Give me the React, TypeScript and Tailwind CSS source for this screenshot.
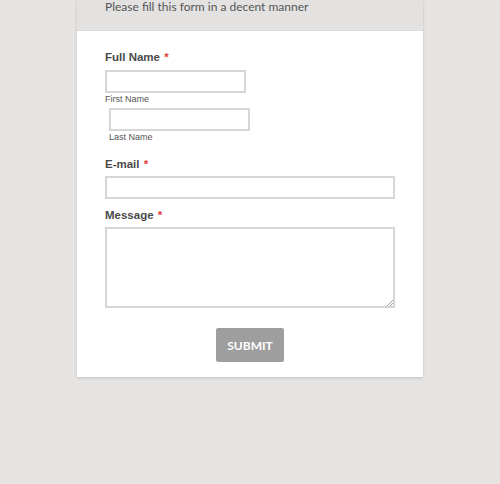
import React from "react";

export default function App() {
  const label = "text-[11.5px] font-bold text-[#4a4a4a] leading-[14px]";
  const sans = { fontFamily: '"Liberation Sans", Arial, sans-serif' } as React.CSSProperties;
  return (
    <div className="w-[500px] h-[484px] bg-[#e5e4e2] overflow-hidden" style={sans}>
      <div className="ml-[77px] w-[346px] h-[377px] bg-white shadow-[0_1px_3px_rgba(0,0,0,0.15)] flex flex-col">
        <div className="h-[31px] bg-[#e3e2e1] pl-[28px] pt-[1px] border-b border-dotted border-[#d6d5d3]">
          <div
            className="text-[12px] text-[#555] leading-[12px]"
            style={{ fontFamily: 'Lato, sans-serif' }}
          >
            Please fill this form in a decent manner
          </div>
        </div>
        <div className="pl-[28px] pr-[28px] flex flex-col">
          <div className={`${label} mt-[19px]`}>
            Full Name <span className="text-[#e53935] ml-[1px]">*</span>
          </div>
          <div className="mt-[6px] w-[141px] h-[23px] border-2 border-[#d6d6d6] bg-white" />
          <div className="text-[9px] text-[#555] leading-[11px] mt-[1px]">First Name</div>
          <div className="ml-[4px] mt-[3px] w-[141px] h-[23px] border-2 border-[#d6d6d6] bg-white" />
          <div className="ml-[4px] text-[9px] text-[#555] leading-[11px] mt-[1px]">Last Name</div>
          <div className={`${label} mt-[14px]`}>
            E-mail <span className="text-[#e53935] ml-[1px]">*</span>
          </div>
          <div className="mt-[5px] w-[290px] h-[23px] border-2 border-[#d6d6d6] bg-white" />
          <div className={`${label} mt-[9px]`}>
            Message <span className="text-[#e53935] ml-[1px]">*</span>
          </div>
          <div className="relative mt-[5px] w-[290px] h-[81px] border-2 border-[#d6d6d6] bg-white">
            <svg className="absolute right-0 bottom-0" width="6" height="6" viewBox="0 0 6 6">
              <line x1="0" y1="6" x2="6" y2="0" stroke="#888" strokeWidth="0.8" />
              <line x1="3" y1="6" x2="6" y2="3" stroke="#888" strokeWidth="0.8" />
            </svg>
          </div>
          <div className="flex justify-center mt-[20px]">
            <div
              className="w-[68px] h-[34px] bg-[#9e9e9e] rounded-[2px] flex items-center justify-center text-white text-[12px] font-bold pt-[1px]"
              style={{ fontFamily: 'Lato, sans-serif' }}
            >
              SUBMIT
            </div>
          </div>
        </div>
      </div>
    </div>
  );
}
